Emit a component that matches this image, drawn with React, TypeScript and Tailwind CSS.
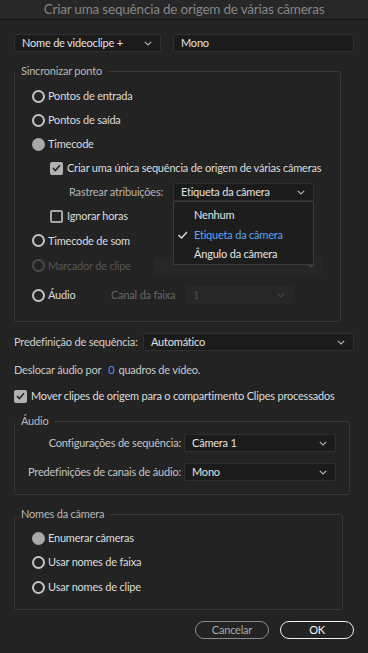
import React from 'react';

type RadioState = 'on' | 'off' | 'disabled';

function Radio({ state }: { state: RadioState }) {
  if (state === 'on') {
    return <span className="block w-[13px] h-[13px] rounded-full bg-[#a9a9a9] shrink-0" />;
  }
  return (
    <span
      className={
        'block w-[13px] h-[13px] rounded-full border-[2px] shrink-0 ' +
        (state === 'disabled' ? 'border-[#4a4a4a]' : 'border-[#c4c4c4]')
      }
    />
  );
}

function Checkbox({ checked }: { checked: boolean }) {
  if (checked) {
    return (
      <span className="flex items-center justify-center w-[13px] h-[13px] rounded-[2px] bg-[#b1b1b1] shrink-0">
        <svg width="9" height="8" viewBox="0 0 9 8">
          <path d="M1 4.2 L3.4 6.6 L8 1.2" fill="none" stroke="#2a2a2a" strokeWidth="1.7" />
        </svg>
      </span>
    );
  }
  return <span className="block w-[13px] h-[13px] rounded-[2px] border-[2px] border-[#a6a6a6] shrink-0" />;
}

function Chevron({ color = '#b4b4b4' }: { color?: string }) {
  return (
    <svg width="8" height="5" viewBox="0 0 8 5" className="shrink-0">
      <path d="M0.8 0.8 L4 4 L7.2 0.8" fill="none" stroke={color} strokeWidth="1.1" />
    </svg>
  );
}

function Select({
  value,
  className = '',
  disabled = false,
}: {
  value: string;
  className?: string;
  disabled?: boolean;
}) {
  return (
    <div
      className={
        'flex items-center justify-between h-[18px] pl-[7px] pr-[8px] rounded-[2px] shrink-0 whitespace-nowrap ' +
        (disabled
          ? 'bg-[#272727] text-[#4c4c4c]'
          : 'bg-[#1b1b1b] border border-[#2f2f2f] text-[#e2e2e2]') +
        ' ' +
        className
      }
    >
      <span>{value}</span>
      <Chevron color={disabled ? '#4a4a4a' : '#b4b4b4'} />
    </div>
  );
}

function RadioRow({
  label,
  state,
  className = '',
}: {
  label: string;
  state: RadioState;
  className?: string;
}) {
  return (
    <div className={'flex items-center gap-[3px] h-[24px] ' + className}>
      <Radio state={state} />
      <span className={state === 'disabled' ? 'text-[#555555]' : 'text-[#dcdcdc]'}>{label}</span>
    </div>
  );
}

export default function App() {
  return (
    <div
      className="w-[368px] h-[653px] bg-[#232323] text-[11px] leading-[14px] tracking-[-0.2px] text-[#dcdcdc] overflow-hidden whitespace-nowrap"
      style={{ fontFamily: 'Lato, "Open Sans", sans-serif' }}
    >
      {/* title bar */}
      <div className="h-[20px] bg-[#272727] border-b border-[#141414] text-center text-[13.5px] leading-[19px] tracking-[-0.2px] text-[#858585]">
        Criar uma sequência de origem de várias câmeras
      </div>

      <div className="flex items-center gap-[12px] mt-[14px] px-[14px]">
        <Select value="Nome de videoclipe +" className="w-[147px]" />
        <div className="flex-1 h-[18px] bg-[#1b1b1b] border border-[#2f2f2f] rounded-[2px] pl-[7px] flex items-center text-[#e2e2e2]">
          Mono
        </div>
      </div>

      {/* Sincronizar ponto */}
      <fieldset className="ml-[14px] mt-[12px] w-[327px] border border-[#383838] rounded-[3px] pt-[6px] pb-[14px] pl-[17px] relative">
        <legend className="-ml-[17px] px-[6px] text-[#b8b8b8]">Sincronizar ponto</legend>
        <RadioRow label="Pontos de entrada" state="off" />
        <RadioRow label="Pontos de saída" state="off" />
        <RadioRow label="Timecode" state="on" />
        <div className="flex items-center gap-[4px] h-[24px] ml-[18px]">
          <Checkbox checked />
          <span>Criar uma única sequência de origem de várias câmeras</span>
        </div>
        <div className="flex items-center h-[24px] ml-[37px] relative">
          <span className="w-[104px] text-[#b4b4b4]">Rastrear atribuições:</span>
          <Select value="Etiqueta da câmera" className="w-[141px]" />
          {/* open menu */}
          <div className="absolute left-[104px] top-[21px] w-[141px] h-[64px] bg-[#1d1d1d] border border-[#3a3a3a] z-10 flex flex-col pt-[3px]">
            <div className="h-[20px] flex items-center pl-[20px] text-[#e4e4e4]">Nenhum</div>
            <div className="h-[21px] flex items-center text-[#5ea4ef]">
              <svg width="20" height="10" viewBox="0 0 20 10" className="shrink-0">
                <path d="M4.5 5 L7.5 8 L13 2" fill="none" stroke="#dcdcdc" strokeWidth="1.4" />
              </svg>
              <span>Etiqueta da câmera</span>
            </div>
            <div className="h-[20px] flex items-center pl-[20px] text-[#e4e4e4]">Ângulo da câmera</div>
          </div>
        </div>
        <div className="flex items-center gap-[4px] h-[24px] ml-[18px]">
          <Checkbox checked={false} />
          <span>Ignorar horas</span>
        </div>
        <RadioRow label="Timecode de som" state="off" className="h-[25px]" />
        <div className="flex items-center h-[25px]">
          <div className="w-[121px] flex items-center gap-[3px]">
            <Radio state="disabled" />
            <span className="text-[#555555]">Marcador de clipe</span>
          </div>
          <Select value="" disabled className="w-[170px]" />
        </div>
        <div className="flex items-center h-[24px] mt-[5px]">
          <div className="w-[79px] flex items-center gap-[3px]">
            <Radio state="off" />
            <span>Áudio</span>
          </div>
          <span className="w-[75px] text-[#666666]">Canal da faixa</span>
          <Select value="1" disabled className="w-[107px]" />
        </div>
      </fieldset>

      <div className="flex items-center h-[18px] mt-[11px] pl-[14px]">
        <span className="w-[129px] text-[#d0d0d0]">Predefinição de sequência:</span>
        <Select value="Automático" className="w-[211px]" />
      </div>

      <div className="flex items-center h-[18px] mt-[10px] pl-[14px] text-[#c8c8c8]">
        <span>Deslocar áudio por</span>
        <span className="ml-[7px] mr-[4px] text-[#4f97e6]">0</span>
        <span>quadros de vídeo.</span>
      </div>

      <div className="flex items-center gap-[4px] h-[18px] mt-[8px] pl-[14px]">
        <Checkbox checked />
        <span>Mover clipes de origem para o compartimento Clipes processados</span>
      </div>

      {/* Áudio */}
      <fieldset className="ml-[14px] mt-[9px] w-[336px] border border-[#383838] rounded-[3px] pt-[6px] pb-[13px]">
        <legend className="px-[6px] text-[#b8b8b8]">Áudio</legend>
        <div className="flex items-center h-[18px]">
          <span className="w-[166px] text-right text-[#c4c4c4]">Configurações de sequência:</span>
          <Select value="Câmera 1" className="ml-[3px] w-[152px]" />
        </div>
        <div className="flex items-center h-[18px] mt-[11px]">
          <span className="w-[166px] text-right text-[#c4c4c4]">Predefinições de canais de áudio:</span>
          <Select value="Mono" className="ml-[3px] w-[152px]" />
        </div>
      </fieldset>

      {/* Nomes da câmera */}
      <fieldset className="ml-[14px] mt-[12px] w-[329px] border border-[#383838] rounded-[3px] pt-[5px] pb-[10px] pl-[17px]">
        <legend className="-ml-[17px] px-[6px] text-[#b8b8b8]">Nomes da câmera</legend>
        <RadioRow label="Enumerar câmeras" state="on" />
        <RadioRow label="Usar nomes de faixa" state="off" />
        <RadioRow label="Usar nomes de clipe" state="off" className="mt-[1px]" />
      </fieldset>

      <div className="flex justify-end gap-[11px] mt-[11px] pr-[14px]">
        <button className="w-[74px] h-[18px] rounded-full border-[1.5px] border-[#8a8a8a] text-[#a8a8a8] leading-[14px]">
          Cancelar
        </button>
        <button className="w-[74px] h-[18px] rounded-full border-[1.5px] border-[#f0f0f0] text-[#f4f4f4] leading-[14px]">
          OK
        </button>
      </div>
    </div>
  );
}
